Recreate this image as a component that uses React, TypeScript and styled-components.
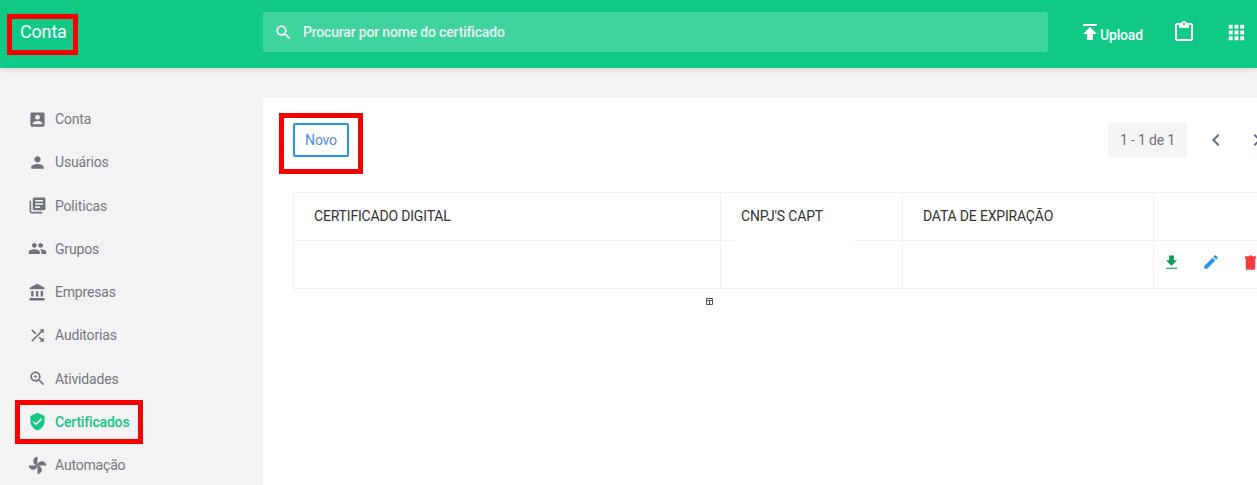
import { FC } from 'react';
import styled, { createGlobalStyle } from 'styled-components';

const GlobalStyle = createGlobalStyle`
  html, body {
    margin: 0;
    height: 100%;
    overflow: hidden;
  }
  body {
    font-family: Roboto, "Liberation Sans", sans-serif;
    font-size: 14px;
    letter-spacing: -0.18px;
    background: #f3f3f3;
  }
  * {
    box-sizing: border-box;
  }
`;

const ICONS: Record<string, string> = {
  account:
    'M3 5v14c0 1.1.89 2 2 2h14c1.1 0 2-.9 2-2V5c0-1.1-.9-2-2-2H5c-1.11 0-2 .9-2 2zm12 4c0 1.66-1.34 3-3 3s-3-1.34-3-3 1.34-3 3-3 3 1.34 3 3zm-9 8c0-2 4-3.1 6-3.1s6 1.1 6 3.1v1H6v-1z',
  person: 'M12 12c2.21 0 4-1.79 4-4s-1.79-4-4-4-4 1.79-4 4 1.79 4 4 4zm0 2c-2.67 0-8 1.34-8 4v2h16v-2c0-2.66-5.33-4-8-4z',
  books:
    'M4 6H2v14c0 1.1.9 2 2 2h14v-2H4V6zm16-4H8c-1.1 0-2 .9-2 2v12c0 1.1.9 2 2 2h12c1.1 0 2-.9 2-2V4c0-1.1-.9-2-2-2zm-1 9H9V9h10v2zm-4 4H9v-2h6v2zm4-8H9V5h10v2z',
  people:
    'M16 11c1.66 0 2.99-1.34 2.99-3S17.66 5 16 5c-1.66 0-3 1.34-3 3s1.34 3 3 3zm-8 0c1.66 0 2.99-1.34 2.99-3S9.66 5 8 5C6.34 5 5 6.34 5 8s1.34 3 3 3zm0 2c-2.33 0-7 1.17-7 3.5V19h14v-2.5c0-2.33-4.67-3.5-7-3.5zm8 0c-.29 0-.62.02-.97.05 1.16.84 1.97 1.97 1.97 3.45V19h6v-2.5c0-2.33-4.67-3.5-7-3.5z',
  bank: 'M4 10v7h3v-7H4zm6 0v7h3v-7h-3zM2 22h19v-3H2v3zm14-12v7h3v-7h-3zm-4.5-9L2 6v2h19V6l-9.5-5z',
  shuffle:
    'M10.59 9.17L5.41 4 4 5.41l5.17 5.17 1.42-1.41zM14.5 4l2.04 2.04L4 18.59 5.41 20 17.96 7.46 20 9.5V4h-5.5zm.33 9.41l-1.41 1.41 3.13 3.13L14.5 20H20v-5.5l-2.04 2.04-3.13-3.13z',
  zoomIn:
    'M15.5 14h-.79l-.28-.27C15.41 12.59 16 11.11 16 9.5 16 5.91 13.09 3 9.5 3S3 5.91 3 9.5 5.91 16 9.5 16c1.61 0 3.09-.59 4.23-1.57l.27.28v.79l5 4.99L20.49 19l-4.99-5zm-6 0C7.01 14 5 11.99 5 9.5S7.01 5 9.5 5 14 7.01 14 9.5 11.99 14 9.5 14zm2.5-4h-2v2H9v-2H7V9h2V7h1v2h2v1z',
  shield: 'M12 1L3 5v6c0 5.55 3.84 10.74 9 12 5.16-1.26 9-6.45 9-12V5l-9-4zm-2 16l-4-4 1.41-1.41L10 14.17l6.59-6.59L18 9l-8 8z',
  fan: 'M12 12c0-3 2.5-5.5 5.5-5.5S23 9 23 12H12zm0 0c0 3-2.5 5.5-5.5 5.5S1 15 1 12h11zm0 0c-3 0-5.5-2.5-5.5-5.5S9 1 12 1v11zm0 0c3 0 5.5 2.5 5.5 5.5S15 23 12 23V12z',
  search:
    'M15.5 14h-.79l-.28-.27C15.41 12.59 16 11.11 16 9.5 16 5.91 13.09 3 9.5 3S3 5.91 3 9.5 5.91 16 9.5 16c1.61 0 3.09-.59 4.23-1.57l.27.28v.79l5 4.99L20.49 19l-4.99-5zm-6 0C7.01 14 5 11.99 5 9.5S7.01 5 9.5 5 14 7.01 14 9.5 11.99 14 9.5 14z',
  publish: 'M5 4v2h14V4H5zm0 10h4v6h6v-6h4l-7-7-7 7z',
  paste:
    'M19 3h-4.18C14.4 1.84 13.3 1 12 1s-2.4.84-2.82 2H5c-1.1 0-2 .9-2 2v14c0 1.1.9 2 2 2h14c1.1 0 2-.9 2-2V5c0-1.1-.9-2-2-2zm-7 0c.55 0 1 .45 1 1s-.45 1-1 1-1-.45-1-1 .45-1 1-1zm7 16H5V5h2v3h10V5h2v14z',
  apps: 'M4 8h4V4H4v4zm6 12h4v-4h-4v4zm-6 0h4v-4H4v4zm0-6h4v-4H4v4zm6 0h4v-4h-4v4zm6-10v4h4V4h-4zm-6 4h4V4h-4v4zm6 6h4v-4h-4v4zm0 6h4v-4h-4v4z',
  download: 'M19 9h-4V3H9v6H5l7 7 7-7zM5 18.6v1.2h14v-1.2H5z',
  edit: 'M3 17.25V21h3.75L17.81 9.94l-3.75-3.75L3 17.25zM20.71 7.04c.39-.39.39-1.02 0-1.41l-2.34-2.34c-.39-.39-1.02-.39-1.41 0l-1.83 1.83 3.75 3.75 1.83-1.83z',
  trash: 'M5 4h4.5l1-1h3l1 1H19v3h-1v13c0 .6-.4 1-1 1H7c-.6 0-1-.4-1-1V7H5V4z',
  chevronLeft: 'M15.41 7.41L14 6l-6 6 6 6 1.41-1.41L10.83 12z',
  chevronRight: 'M10 6L8.59 7.41 13.17 12l-4.58 4.59L10 18l6-6z',
};

const Svg = styled.svg<{ $size: number; $color: string }>`
  display: block;
  flex: none;
  width: ${({ $size }) => $size}px;
  height: ${({ $size }) => $size}px;
  fill: ${({ $color }) => $color};
`;

const Icon: FC<{ name: string; size?: number; color?: string }> = ({ name, size = 18, color = '#6f747c' }) => (
  <Svg viewBox="0 0 24 24" $size={size} $color={color}>
    <path d={ICONS[name]} />
  </Svg>
);

const Page = styled.div`
  position: relative;
  height: 100vh;
  overflow: hidden;
  display: flex;
  flex-direction: column;
`;

const TopBar = styled.header`
  flex: none;
  height: 68px;
  padding-bottom: 4px;
  display: flex;
  align-items: center;
  background: #10c985;
  box-shadow: 0 1px 6px rgba(0, 0, 0, 0.16);
  color: #fff;
  position: relative;
  z-index: 1;
`;

const Brand = styled.div`
  flex: none;
  width: 263px;
  padding: 0 0 1px 20px;
  font-size: 18px;
  line-height: 28px;
`;

const SearchBox = styled.div`
  flex: none;
  width: 785px;
  height: 40px;
  display: flex;
  align-items: center;
  gap: 10px;
  padding-left: 11px;
  border-radius: 2px;
  background: rgba(255, 255, 255, 0.2);
  font-weight: 500;
  color: rgba(255, 255, 255, 0.9);
`;

const TopActions = styled.div`
  display: flex;
  align-items: center;
  padding-left: 30px;
`;

const UploadButton = styled.div`
  display: flex;
  align-items: center;
  width: 94px;
  font-weight: 500;
  line-height: 17px;
`;

const UploadLabel = styled.span`
  margin: 6px 0 0 -2px;
`;

const ClipboardSlot = styled.div`
  width: 53px;
`;

const Body = styled.div`
  flex: 1;
  display: flex;
  min-height: 0;
`;

const Sidebar = styled.nav`
  flex: none;
  width: 263px;
  padding-top: 29.4px;
`;

const NavItem = styled.div<{ $active?: boolean }>`
  height: 43.25px;
  display: flex;
  align-items: center;
  gap: 8px;
  padding-left: 28px;
  color: ${({ $active }) => ($active ? '#10c985' : '#747881')};
  font-weight: ${({ $active }) => ($active ? 500 : 400)};
`;

const Card = styled.main`
  flex: 1;
  min-width: 0;
  margin-top: 30px;
  padding: 25px 0 0 30px;
  background: #fff;
  overflow: hidden;
`;

const CardToolbar = styled.div`
  display: flex;
  align-items: center;
  height: 34px;
`;

const NewButton = styled.button`
  flex: none;
  width: 56px;
  height: 34px;
  padding: 0;
  border: 2px solid #2196f3;
  border-radius: 2px;
  background: #fff;
  color: #4a8cf0;
  font: 400 14px Roboto, "Liberation Sans", sans-serif;
  letter-spacing: -0.18px;
`;

const Pager = styled.div`
  display: flex;
  align-items: center;
  margin-left: 759px;
  flex: none;
`;

const PageCount = styled.div`
  width: 79px;
  height: 34px;
  display: flex;
  align-items: center;
  justify-content: center;
  border-radius: 2px;
  background: #f5f5f5;
  color: #6d7480;
`;

const PageArrow = styled.div`
  margin-left: 17px;
  width: 24px;
`;

const CertTable = styled.div`
  margin-top: 35px;
  width: 1000px;
  display: grid;
  grid-template-columns: 427px 182px 251px 140px;
  grid-auto-rows: 48px;
  border-top: 1px solid #f1f1f1;
  position: relative;
`;

const Cell = styled.div`
  display: flex;
  align-items: center;
  padding: 0 20px 2px;
  border-left: 1px solid #f1f1f1;
  border-bottom: 1px solid #f1f1f1;
  color: #333;
`;

const ActionCell = styled(Cell)`
  gap: 21px;
  padding: 0 0 5px 8px;
`;

const LinePatch = styled.div`
  position: absolute;
  left: 442px;
  top: 46px;
  width: 120px;
  height: 3px;
  background: #fff;
`;

const TinyGlyph = styled.svg`
  display: block;
  margin: 8px 0 0 412px;
  width: 9px;
  height: 9px;
`;

const RedMark = styled.div<{ $x: number; $y: number; $w: number; $h: number }>`
  position: absolute;
  left: ${({ $x }) => $x}px;
  top: ${({ $y }) => $y}px;
  width: ${({ $w }) => $w}px;
  height: ${({ $h }) => $h}px;
  border: 5px solid #f90000;
  z-index: 2;
`;

const NAV_ITEMS = [
  { icon: 'account', label: 'Conta' },
  { icon: 'person', label: 'Usuários' },
  { icon: 'books', label: 'Politicas' },
  { icon: 'people', label: 'Grupos' },
  { icon: 'bank', label: 'Empresas' },
  { icon: 'shuffle', label: 'Auditorias' },
  { icon: 'zoomIn', label: 'Atividades' },
  { icon: 'shield', label: 'Certificados', active: true },
  { icon: 'fan', label: 'Automação' },
];

export default function App() {
  return (
    <Page>
      <GlobalStyle />
      <TopBar>
        <Brand>Conta</Brand>
        <SearchBox>
          <Icon name="search" size={19} color="#fff" />
          Procurar por nome do certificado
        </SearchBox>
        <TopActions>
          <UploadButton>
            <Icon name="publish" size={24} color="#fff" />
            <UploadLabel>Upload</UploadLabel>
          </UploadButton>
          <ClipboardSlot>
            <Icon name="paste" size={24} color="#fff" />
          </ClipboardSlot>
          <Icon name="apps" size={23} color="#fff" />
        </TopActions>
      </TopBar>
      <Body>
        <Sidebar>
          {NAV_ITEMS.map((item) => (
            <NavItem key={item.label} $active={item.active}>
              <Icon name={item.icon} size={19} color={item.active ? '#10c985' : '#6f747c'} />
              {item.label}
            </NavItem>
          ))}
        </Sidebar>
        <Card>
          <CardToolbar>
            <NewButton>Novo</NewButton>
            <Pager>
              <PageCount>1 - 1 de 1</PageCount>
              <PageArrow>
                <Icon name="chevronLeft" size={24} color="#5f6d85" />
              </PageArrow>
              <PageArrow>
                <Icon name="chevronRight" size={24} color="#5f6d85" />
              </PageArrow>
            </Pager>
          </CardToolbar>
          <CertTable>
            <Cell>CERTIFICADO DIGITAL</Cell>
            <Cell>CNPJ'S CAPT</Cell>
            <Cell>DATA DE EXPIRAÇÃO</Cell>
            <Cell />
            <Cell />
            <Cell />
            <Cell />
            <ActionCell>
              <Icon name="download" size={19} color="#0d9b53" />
              <Icon name="edit" size={18} color="#2196f3" />
              <Icon name="trash" size={19} color="#ff3b3f" />
            </ActionCell>
            <LinePatch />
          </CertTable>
          <TinyGlyph viewBox="0 0 9 9">
            <path d="M1.5 1.5h6v6h-6zM1.5 3.5h6M4.5 3.5v4" fill="none" stroke="#555" />
          </TinyGlyph>
        </Card>
      </Body>
      <RedMark $x={7} $y={14} $w={71} $h={41} />
      <RedMark $x={279} $y={113} $w={84} $h={61} />
      <RedMark $x={15} $y={400} $w={128} $h={44} />
    </Page>
  );
}
